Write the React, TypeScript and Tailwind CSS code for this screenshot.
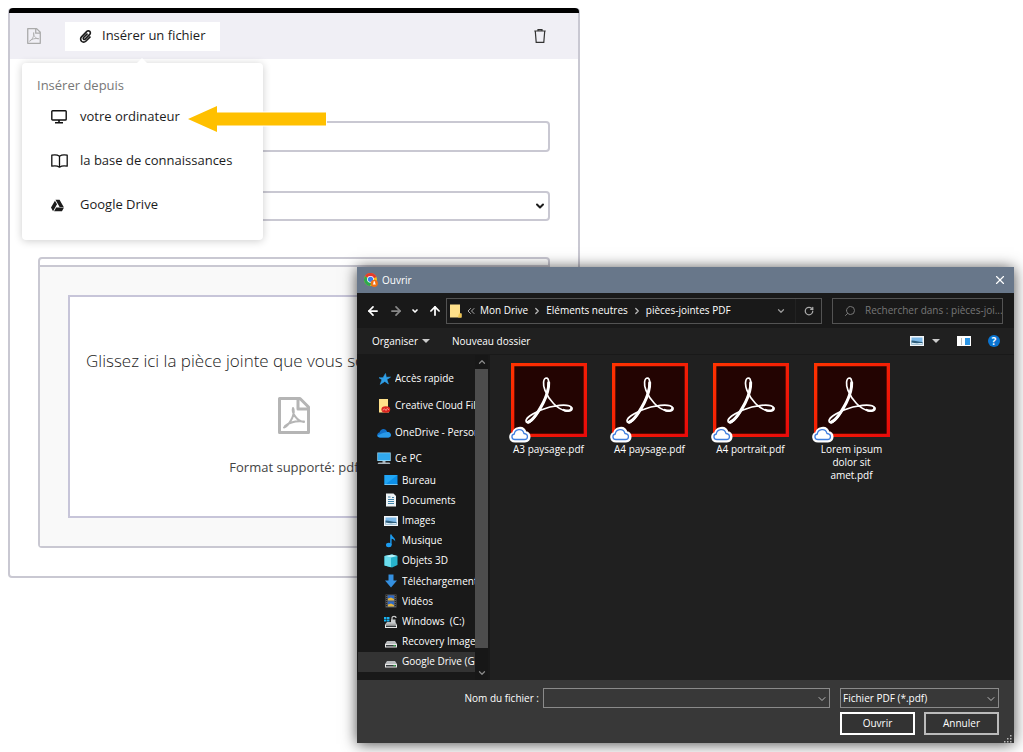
import type { ReactNode } from "react";
import {
  ArrowLeft,
  ArrowRight,
  ArrowUp,
  ChevronDown,
  ChevronRight,
  ChevronUp,
  ChevronsLeft,
  RotateCw,
  Search,
  X,
} from "lucide-react";
import { FaGoogleDrive, FaPaperclip } from "react-icons/fa";

type Place = { label: string; icon: ReactNode; active?: boolean };

function PdfIcon({ className }: { className?: string }) {
  return (
    <svg viewBox="0 0 32 37" className={className} fill="none" stroke="currentColor">
      <path d="M1.500 1.500H22L30.500 10v25.500h-29zM20 1.500V12h10.500" strokeWidth="3" strokeLinejoin="round" />
      <path d="M15 11c-1.500 5 4 13.500 11 14M15.500 12c1.500 7-5 17-9.500 18.500M7 29c5-4 11-5.500 19-4.500" strokeWidth="2" strokeLinecap="round" />
    </svg>
  );
}

function MonitorIcon() {
  return (
    <svg viewBox="0 0 16 14" className="h-[14px] w-4" fill="none" stroke="#111">
      <rect x="0.8" y="0.8" width="14.400" height="9.200" rx="0.8" strokeWidth="1.400" />
      <path d="M8 10v2.500M4 12.800h8" strokeWidth="1.600" />
    </svg>
  );
}

function BookIcon() {
  return (
    <svg viewBox="0 0 17 14" className="h-[14px] w-[17px]" fill="none" stroke="#111" strokeWidth="1.300" strokeLinejoin="round">
      <path d="M8.500 2.200C6.500.8 3.500.6.8 1.200v11c2.700-.6 5.700-.4 7.700 1 2-1.400 5-1.600 7.700-1v-11C13.500.6 10.500.8 8.500 2.200zM8.500 2.200v11" />
    </svg>
  );
}

function TrashIcon() {
  return (
    <svg viewBox="0 0 12 14" className="h-[14px] w-3" fill="none" stroke="#333" strokeWidth="1.200">
      <path d="M.3 2h11.400M4 1.800V.7h4v1.100M1.300 2.200l.9 11.100h7.600l.9-11.100" />
    </svg>
  );
}

function ChromeIcon() {
  return (
    <svg viewBox="0 0 14 14" className="size-[14px]">
      <circle cx="6.500" cy="6.500" r="6.500" fill="#fbc116" />
      <path d="M6.500 6.500 L.9 3.200A6.500 6.500 0 0 1 12.500 4z" fill="#e33b2e" />
      <path d="M.9 3.200A6.500 6.500 0 0 0 6 13l2.800-5z" fill="#2da94f" />
      <circle cx="6.500" cy="6.300" r="3.400" fill="#fff" />
      <circle cx="6.500" cy="6.300" r="2.600" fill="#3b7ded" />
      <circle cx="10.300" cy="10.300" r="3.600" fill="#f07113" />
      <path d="M8.800 11.500c0-2 3-2 3 0z" fill="#fff" />
      <circle cx="10.300" cy="9.200" r="0.900" fill="#fff" />
    </svg>
  );
}

function FolderIcon() {
  return (
    <svg viewBox="0 0 12 14" className="h-[14px] w-3">
      <path d="M0 .5h10v9h1.500v4H0z" fill="#ffe08a" />
      <path d="M9 9.500h2.500v4H8z" fill="#efc44f" />
    </svg>
  );
}

function DriveIcon() {
  return (
    <svg viewBox="0 0 14 14" className="size-[14px]">
      <path d="M3 6h8l2 3H1z" fill="#b9bcbe" />
      <path d="M1 9h12v3.500H1z" fill="#e7e7e7" />
      <path d="M2 10h10v1.500H2z" fill="#33383b" />
      <path d="M9.500 10.200h2v1h-2z" fill="#39d353" />
    </svg>
  );
}

function PictureIcon() {
  return (
    <svg viewBox="0 0 14 14" className="size-[14px]">
      <path d="M0 2h14v10H0z" fill="#f3f6f8" />
      <path d="M1.500 3.500h11v7h-11z" fill="#7db9e8" />
      <path d="M1.500 6.500c4 0 7 1.500 11 1.500v2.500h-11z" fill="#2f5f7d" />
      <path d="M1.500 8.500c4 1 7 .5 11 .5v1.500h-11z" fill="#d8ecf7" />
    </svg>
  );
}

const ROOTS: Place[] = [
  {
    label: "Accès rapide",
    icon: (
      <svg viewBox="0 0 14 14" className="size-[14px]">
        <path d="M8.500 1.500l.8 3.800 4.200-.2-3.600 2.500 1.500 4.400-3.600-2.600-4.600 3 1.700-4.700L2 5.700l4 .1z" fill="#2f9fe8" stroke="#2f9fe8" strokeWidth="0.600" />
      </svg>
    ),
  },
  {
    label: "Creative Cloud Files",
    icon: (
      <svg viewBox="0 0 14 14" className="size-[14px]">
        <path d="M2 0h9v9h1v4.500H2z" fill="#ffe08a" />
        <ellipse cx="8.800" cy="10.500" rx="4.400" ry="3.200" fill="#da2420" />
        <path d="M6 11.500c0-2 2.500-2 3 0 .5-3 2.800-2 2.500-.5" fill="none" stroke="#ffb5a8" strokeWidth="0.800" />
      </svg>
    ),
  },
  {
    label: "OneDrive - Personal",
    icon: (
      <svg viewBox="0 0 14 14" className="size-[14px]">
        <path d="M3 11.500C-.6 11.500-.6 7 2.500 6.500 3.500 2 9 1.800 10.200 6c4.600-.2 4.800 5.500 1 5.500z" fill="#1170c9" />
        <path d="M3 11.500c-1.500 0-2.500-1-2.600-2L6 7l4.200-1c4.600-.2 4.800 5.500 1 5.500z" fill="#2a9ae8" />
      </svg>
    ),
  },
  {
    label: "Ce PC",
    icon: (
      <svg viewBox="0 0 14 14" className="size-[14px]">
        <path d="M.3 1.500h13.400v8.500H.3z" fill="#9ddcf8" />
        <path d="M1 2.200h12v7H1z" fill="#31a9ee" />
        <path d="M5.500 10h3v1.500h-3zM1.500 11.500h11l1 1.500H.5z" fill="#aab4bb" />
      </svg>
    ),
  },
];

const CHILDREN: Place[] = [
  {
    label: "Bureau",
    icon: (
      <svg viewBox="0 0 14 14" className="size-[14px]">
        <path d="M.5 2h13v10H.5z" fill="#0c8fe8" />
        <path d="M.5 2h13L2 11H.5z" fill="#21a6f5" />
        <path d="M.5 11h13v1H.5z" fill="#6fc3f5" />
      </svg>
    ),
  },
  {
    label: "Documents",
    icon: (
      <svg viewBox="0 0 14 14" className="size-[14px]">
        <path d="M2 .5h7.500L12 3v10.500H2z" fill="#eef3f6" />
        <path d="M4 4h2.500M4 6.500h6M4 8.500h6M4 10.500h6M8 4.500h2" stroke="#4183a9" />
      </svg>
    ),
  },
  { label: "Images", icon: <PictureIcon /> },
  {
    label: "Musique",
    icon: (
      <svg viewBox="0 0 14 14" className="size-[14px]">
        <ellipse cx="4.800" cy="11" rx="2.800" ry="2.200" fill="#1c9cf0" />
        <path d="M6.200.5h1.400c.2 2.500 4 3 3.600 7-.6-1.600-2-2.500-3.600-2.800V11H6.200z" fill="#1c9cf0" />
      </svg>
    ),
  },
  {
    label: "Objets 3D",
    icon: (
      <svg viewBox="0 0 14 14" className="size-[14px]">
        <path d="M.5 2L8 .5 13.500 2v9L8 13.500.5 11.500z" fill="#27b3cc" />
        <path d="M.5 2L7 3.500v9.800L.5 11.500z" fill="#6bdcec" />
        <path d="M.5 2L8 .5 13.500 2 7 3.500z" fill="#b6f3fa" />
      </svg>
    ),
  },
  {
    label: "Téléchargements",
    icon: (
      <svg viewBox="0 0 14 14" className="size-[14px]">
        <path d="M4.500.5h5v6H13l-6 7-6-7h3.500z" fill="#3590e0" />
      </svg>
    ),
  },
  {
    label: "Vidéos",
    icon: (
      <svg viewBox="0 0 14 14" className="size-[14px]">
        <path d="M1.500.5h11v13h-11z" fill="#5b5d60" />
        <path d="M4 1.500h6v5H4zM4 7.500h6v5H4z" fill="#2b68c7" />
        <path d="M4 4.500l3-1 3 1.500v1.500H4zM4 10.500l3-1 3 1.500v1.500H4z" fill="#e2b23c" />
        <path d="M2.700 1v12M11.300 1v12" stroke="#17191a" strokeDasharray="1 1" />
      </svg>
    ),
  },
  {
    label: "Windows  (C:)",
    icon: (
      <svg viewBox="0 0 14 14" className="size-[14px]">
        <path d="M3 7h8l2 2.500H1z" fill="#b9bcbe" />
        <path d="M1 9.500h12V13H1z" fill="#e7e7e7" />
        <path d="M2 10.500h10V12H2z" fill="#33383b" />
        <path d="M0 2h2.500v2H0zM3 2h2.500v2H3zM0 4.500h2.500v2H0zM3 4.500h2.500v2H3z" fill="#19b2ef" />
        <path d="M8 5V3c0-2.300 4-2.300 4 0" fill="none" stroke="#ccc" strokeWidth="1.200" />
        <path d="M7 4.500h4.500V8H7z" fill="#c9cccd" />
      </svg>
    ),
  },
  { label: "Recovery Image", icon: <DriveIcon /> },
  { label: "Google Drive (G:)", icon: <DriveIcon />, active: true },
];

const FILES = ["A3 paysage.pdf", "A4 paysage.pdf", "A4 portrait.pdf", "Lorem ipsum dolor sit amet.pdf"];

const SOURCES = [
  { label: "votre ordinateur", icon: <MonitorIcon /> },
  { label: "la base de connaissances", icon: <BookIcon /> },
  { label: "Google Drive", icon: <FaGoogleDrive className="size-[13px]" /> },
];

function InsertMenu() {
  return (
    <div className="absolute top-[55px] left-3 w-[241px] rounded bg-white px-[15px] pt-3 pb-[13px] shadow-[0_1px_8px_rgba(0,0,0,0.2)]">
      <svg viewBox="0 0 12 6" className="absolute -top-[5px] left-[114px] h-[6px] w-3">
        <path d="M0 6l6-6 6 6z" fill="#fff" />
      </svg>
      <p className="leading-5 text-[#777]">Insérer depuis</p>
      <ul>
        {SOURCES.map((s) => (
          <li key={s.label}>
            <button type="button" className="flex h-11 w-full items-center pl-[14px] text-left">
              <span className="flex w-[29px]">{s.icon}</span>
              {s.label}
            </button>
          </li>
        ))}
      </ul>
      <svg viewBox="0 0 140 30" className="absolute top-[41px] left-[165px] h-[30px] w-[140px]">
        <path d="M1 15L30 2v6.500h109v13H30V28z" fill="#ffc000" stroke="#fff" strokeWidth="2" paintOrder="stroke" />
      </svg>
    </div>
  );
}

function AttachmentCard() {
  return (
    <section className="relative w-full max-w-[572px] rounded border-2 border-t-0 border-[#c9c8d2] text-[#1c1c1c]">
      <div className="-mx-[1px] h-[5px] rounded-t-sm bg-black" />
      <header className="flex h-[46px] items-center bg-[#f0eff5] pr-8 pl-[17px]">
        <PdfIcon className="h-4 w-[14px] text-[#aaa]" />
        <button type="button" className="ml-6 flex h-[29px] w-[155px] items-center gap-[10px] bg-white pl-[14px]">
          <FaPaperclip className="size-[13px]" />
          Insérer un fichier
        </button>
        <button type="button" aria-label="Supprimer" className="ml-auto">
          <TrashIcon />
        </button>
      </header>

      <div className="px-7 pt-[62px] pb-7">
        <input aria-label="Titre" className="block h-[31px] w-full rounded border-2 border-[#c9c8d2] px-2" />
        <div className="relative mt-[39px]">
          <select aria-label="Affichage" className="block h-[30px] w-full appearance-none rounded border-2 border-[#c9c8d2] px-2">
            <option></option>
          </select>
          <ChevronDown className="pointer-events-none absolute top-[9px] right-1 size-3" strokeWidth={4} />
        </div>

        <div className="mt-9 rounded border-2 border-[#c9c8d2]">
          <div className="h-[6px]" />
          <div className="border-t-2 border-[#c9c8d2] bg-[#f9f9f9] px-7 pt-7 pb-7">
            <div className="flex h-[223px] flex-col items-center overflow-hidden border-2 border-[#c7c5d9] bg-white pt-[52px] text-[#444]">
              <p className="w-full pl-4 text-[17px] leading-6 font-light whitespace-nowrap text-[#222]">
                Glissez ici la pièce jointe que vous souhaitez insérer
              </p>
              <PdfIcon className="mt-6 h-[37px] w-8 text-[#b5b5b5]" />
              <p className="mt-[23px] leading-5">Format supporté: pdf</p>
            </div>
          </div>
        </div>
      </div>
      <InsertMenu />
    </section>
  );
}

function PlaceRow({ place, className }: { place: Place; className: string }) {
  return (
    <li className={className}>
      <span className="shrink-0">{place.icon}</span>
      <span className="overflow-hidden whitespace-pre">{place.label}</span>
    </li>
  );
}

function FileTile({ name }: { name: string }) {
  return (
    <li className="flex flex-col items-center">
      <div className="relative">
        <svg viewBox="0 0 228 222" className="h-[74px] w-[76px]" fill="none">
          <defs>
            <linearGradient id="frame" x1="0" y1="0" x2="1" y2="1">
              <stop offset="0" stopColor="#ff3300" />
              <stop offset="1" stopColor="#e80a0a" />
            </linearGradient>
          </defs>
          <path d="M0 0h228v222H0z" fill="url(#frame)" />
          <path d="M10 10h208v202H10z" fill="#230402" />
          <g stroke="#fff" strokeLinecap="round">
            <path d="M107 45C96 45 95 65 102 82c12 30 36 55 60 61 16 4 24-2 20-9-8-14-60-7-92 7-28 12-50 26-44 36 10 12 34-23 50-56 14-28 24-74 11-76z" strokeWidth="5" />
            <path d="M52 177c14-4 30-30 44-56 10-20 18-44 17-62" strokeWidth="9" />
            <path d="M158 141c12 5 24 1 23-6" strokeWidth="7" />
          </g>
        </svg>
        <svg viewBox="0 0 22 18" className="absolute -bottom-[6px] -left-[2px] h-[18px] w-[22px]">
          <path
            d="M6 15.500C1.500 15.500.8 9.800 5 9 5.500 3.300 14 1.500 15.700 8c5.300.5 4.800 7.500.3 7.500z"
            fill="#fff"
            stroke="#fff"
            strokeWidth="4"
          />
          <path
            d="M6 14.500C2.300 14.500 1.800 9.800 5.300 9 5.800 4 13.500 2.600 15 8.500c4.800.5 4.200 6 .5 6z"
            fill="#fff"
            stroke="#3f7fdf"
            strokeWidth="1.300"
          />
        </svg>
      </div>
      <span className="mt-[6px] w-[74px] text-center leading-[13px]">{name}</span>
    </li>
  );
}

function OpenDialog() {
  return (
    <div
      role="dialog"
      aria-label="Ouvrir"
      className="absolute top-[267px] left-[357px] w-[657px] bg-[#202020] font-['Open_Sans','Noto_Sans',sans-serif] text-[10px] text-white shadow-[0_1px_14px_rgba(0,0,0,0.7)]"
    >
      <div className="flex h-[26px] items-center gap-1 bg-[#68778a] pr-[7px] pl-[7px]">
        <ChromeIcon />
        <span>Ouvrir</span>
        <button type="button" aria-label="Fermer" className="ml-auto">
          <X className="size-[14px]" strokeWidth={2} />
        </button>
      </div>

      <div className="flex h-[35px] items-center bg-[#191919] pr-[11px] pl-[9px]">
        <div className="mr-1 flex w-[76px] items-center justify-between">
          <ArrowLeft className="size-[14px]" strokeWidth={3} />
          <ArrowRight className="size-[14px] text-[#888]" strokeWidth={3} />
          <ChevronDown className="size-2" strokeWidth={5} />
          <ArrowUp className="size-[14px]" strokeWidth={3} />
        </div>
        <div className="flex h-[26px] flex-1 items-center border border-[#535353] pl-[3px]">
          <FolderIcon />
          <ChevronsLeft className="mx-[3px] size-3 text-[#aaa]" />
          <span>Mon Drive</span>
          <ChevronRight className="mx-1 size-[10px] text-[#bbb]" strokeWidth={3} />
          <span>Eléments neutres</span>
          <ChevronRight className="mx-1 size-[10px] text-[#bbb]" strokeWidth={3} />
          <span>pièces-jointes PDF</span>
          <ChevronDown className="mr-[9px] ml-auto size-[10px] text-[#999]" strokeWidth={3} />
          <button type="button" aria-label="Actualiser" className="flex h-full w-[26px] items-center justify-center border-l border-[#222]">
            <RotateCw className="size-[10px] text-[#aaa]" strokeWidth={3} />
          </button>
        </div>
        <label className="ml-[10px] flex h-[26px] w-[171px] items-center gap-[9px] border border-[#535353] pl-[11px] text-[#777]">
          <Search className="size-3 shrink-0 -scale-x-100" strokeWidth={2} />
          <input
            type="text"
            aria-label="Rechercher"
            placeholder="Rechercher dans : pièces-joi..."
            className="min-w-0 flex-1 bg-transparent outline-none placeholder:text-[#777]"
          />
        </label>
      </div>

      <div className="flex h-[26px] items-center bg-[#202020] pr-[14px] pl-[15px]">
        <button type="button" className="flex items-center gap-1">
          Organiser
          <svg viewBox="0 0 8 4" className="h-1 w-2">
            <path d="M0 0h8L4 4z" fill="#ccc" />
          </svg>
        </button>
        <button type="button" className="ml-[22px]">
          Nouveau dossier
        </button>
        <button type="button" aria-label="Affichage" className="ml-auto flex items-center gap-2">
          <PictureIcon />
          <svg viewBox="0 0 8 4" className="h-1 w-2">
            <path d="M0 0h8L4 4z" fill="#ccc" />
          </svg>
        </button>
        <button type="button" aria-label="Volet de visualisation" className="ml-[17px]">
          <svg viewBox="0 0 14 10" className="block h-[10px] w-[14px]">
            <path d="M0 0h14v10H0z" fill="#fff" />
            <path d="M8 2h5v7H8z" fill="#2d96e6" />
            <path d="M4.500 2v7" stroke="#bbb" />
          </svg>
        </button>
        <button type="button" aria-label="Aide" className="ml-[17px] flex size-3 items-center justify-center rounded-full bg-[#0a74d1] font-bold">
          ?
        </button>
      </div>

      <div className="flex h-[326px] border-t border-[#191919]">
        <nav className="flex w-[118px] flex-col bg-[#191919] pt-[10px] pb-2">
          <ul>
            {ROOTS.map((p) => (
              <PlaceRow key={p.label} place={p} className="flex h-[27px] items-center gap-1 pl-5 last:h-6" />
            ))}
          </ul>
          <ul className="flex flex-1 flex-col">
            {CHILDREN.map((p) => (
              <PlaceRow
                key={p.label}
                place={p}
                className={
                  p.active
                    ? "ml-[1px] flex flex-1 items-center gap-1 bg-[#333] pl-[26px]"
                    : "flex flex-1 items-center gap-1 pl-[27px]"
                }
              />
            ))}
          </ul>
        </nav>
        <div className="flex w-[13px] flex-col items-center bg-[#171717]">
          <ChevronUp className="my-[2px] size-[10px] text-[#888]" strokeWidth={3} />
          <div className="w-full flex-1 bg-[#4d4d4d]" />
          <ChevronDown className="mt-5 mb-[2px] size-[10px] text-[#888]" strokeWidth={3} />
        </div>
        <ul className="grid flex-1 auto-rows-min grid-cols-[repeat(4,101px)] border-l-2 border-[#191919] pt-2 pl-2">
          {FILES.map((f) => (
            <FileTile key={f} name={f} />
          ))}
        </ul>
      </div>

      <div className="relative flex flex-col bg-[#383838] pt-2 pr-[15px] pb-2">
        <div className="flex items-center">
          <label htmlFor="filename" className="flex-1 pr-1 text-right">
            Nom du fichier :
          </label>
          <div className="relative w-[287px]">
            <input id="filename" className="block h-5 w-full border border-[#8a8a8a] bg-[#383838] px-1 outline-none" />
            <ChevronDown className="pointer-events-none absolute top-[5px] right-[2px] size-3 text-[#bbb]" />
          </div>
          <div className="relative ml-[10px] w-[159px]">
            <select aria-label="Type de fichier" className="block h-5 w-full appearance-none border border-[#8a8a8a] bg-[#383838] pl-[2px]">
              <option>Fichier PDF (*.pdf)</option>
            </select>
            <ChevronDown className="pointer-events-none absolute top-[5px] right-[2px] size-3 text-[#bbb]" />
          </div>
        </div>
        <div className="mt-1 flex justify-end gap-[9px]">
          <button type="button" className="h-[23px] w-[75px] border-2 border-white bg-[#333]">
            Ouvrir
          </button>
          <button type="button" className="h-[23px] w-[75px] border-2 border-[#bbb] bg-[#333]">
            Annuler
          </button>
        </div>
        <svg viewBox="0 0 8 8" className="absolute right-[2px] bottom-0 size-2" fill="#bbb">
          <path d="M6 0h1.500v1.500H6zM3 3h1.500v1.500H3zM6 3h1.500v1.500H6zM0 6h1.500v1.500H0zM3 6h1.500v1.500H3zM6 6h1.500v1.500H6z" />
        </svg>
      </div>
    </div>
  );
}

export default function App() {
  return (
    <main className="relative min-h-screen overflow-hidden bg-white p-2 font-['Open_Sans',sans-serif] text-[13px]">
      <AttachmentCard />
      <OpenDialog />
    </main>
  );
}
